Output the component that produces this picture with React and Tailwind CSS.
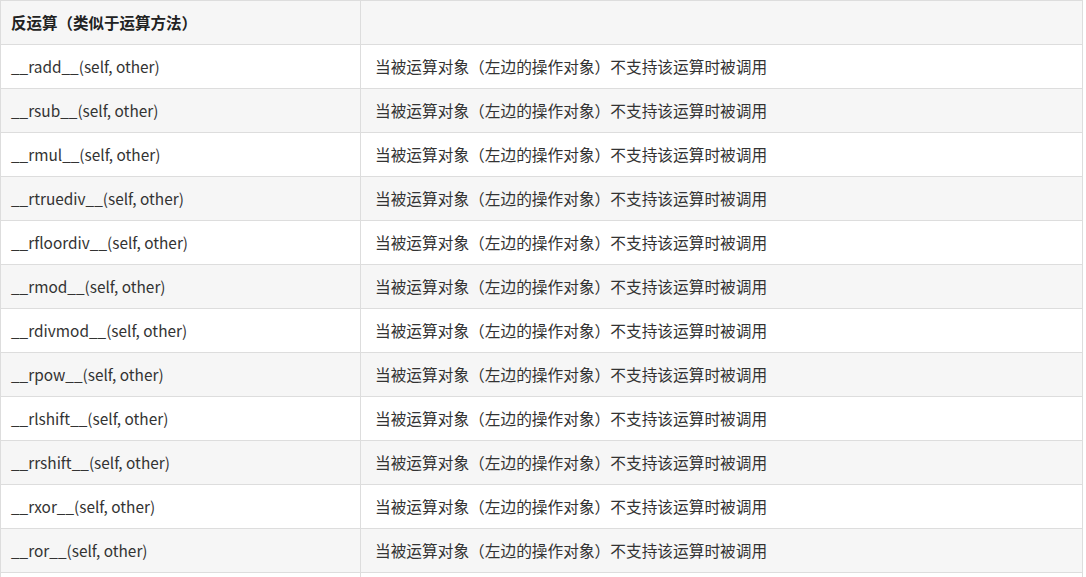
import React from 'react';

const rows = [
  '__radd__(self, other)',
  '__rsub__(self, other)',
  '__rmul__(self, other)',
  '__rtruediv__(self, other)',
  '__rfloordiv__(self, other)',
  '__rmod__(self, other)',
  '__rdivmod__(self, other)',
  '__rpow__(self, other)',
  '__rlshift__(self, other)',
  '__rrshift__(self, other)',
  '__rxor__(self, other)',
  '__ror__(self, other)',
];

const desc = '当被运算对象（左边的操作对象）不支持该运算时被调用';

export default function App() {
  return (
    <div
      className="bg-white h-[577px] overflow-hidden text-[15.4px] text-[#333]"
      style={{ fontFamily: '"Noto Sans CJK SC", "Open Sans", sans-serif' }}
    >
      <div className="w-[1083px] border-t border-l border-r border-[#dddddd]">
        {/* header */}
        <div className="flex h-[44px] border-b border-[#dddddd] bg-[#f6f6f6]">
          <div className="w-[360px] shrink-0 border-r border-[#dddddd] pl-[10px] flex items-center font-bold text-[15.5px] text-[#222]">
            反运算（类似于运算方法）
          </div>
          <div className="flex-1" />
        </div>
        {rows.map((name, i) => (
          <div
            key={name}
            className={`flex h-[44px] border-b border-[#dddddd] ${i % 2 === 0 ? 'bg-white' : 'bg-[#f6f6f6]'}`}
          >
            <div className="w-[360px] shrink-0 border-r border-[#dddddd] pl-[10px] flex items-center">
              {name}
            </div>
            <div className="flex-1 pl-[14px] flex items-center text-[15.7px]">{desc}</div>
          </div>
        ))}
        {/* next row, cut off by the frame */}
        <div className="flex h-[44px] bg-white">
          <div className="w-[360px] shrink-0 border-r border-[#dddddd]" />
          <div className="flex-1" />
        </div>
      </div>
    </div>
  );
}
